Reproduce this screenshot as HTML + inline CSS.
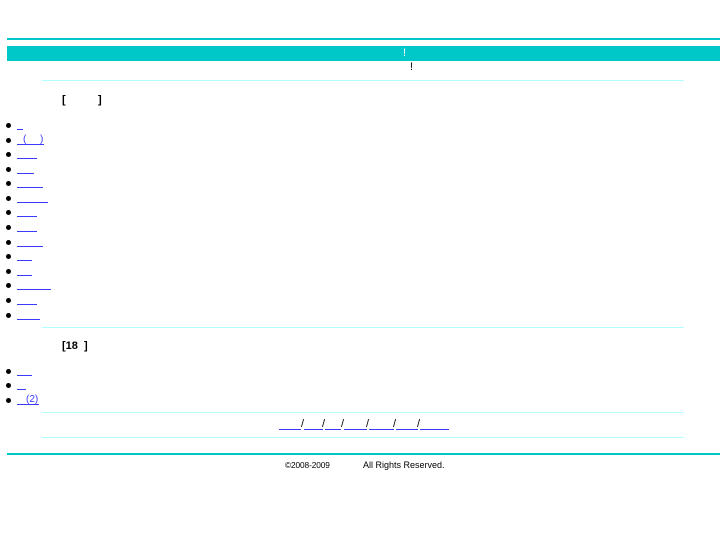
<!DOCTYPE html>
<html><head><meta charset="utf-8"><style>
body{margin:0;width:727px;height:545px;background:#fff;position:relative;font-family:"Liberation Sans",Arial,sans-serif;font-size:11px;color:#000;overflow:hidden}
.a{position:absolute}
.u{position:absolute;height:1px;background:#3a3aff}
.b{position:absolute;left:6px;width:5px;height:5px;border-radius:50%;background:#000}
.t{position:absolute;font-size:11px;line-height:12px}
</style></head><body>
<div class="a" style="left:7px;top:38px;width:713px;height:2px;background:#00c8c8"></div>
<div class="a" style="left:7px;top:46px;width:713px;height:15px;background:#00c8c8"></div>
<div class="t" style="left:403px;top:47px;color:#fff">!</div>
<div class="t" style="left:410px;top:61px">!</div>
<div class="a" style="left:42px;top:80px;width:642px;height:1px;background:#b0ffff"></div>
<div class="t" style="left:62px;top:94px;font-weight:bold">[</div>
<div class="t" style="left:98px;top:94px;font-weight:bold">]</div>

<div class="b" style="top:123px"></div><div class="u" style="left:17px;top:129px;width:6px"></div>
<div class="b" style="top:138px"></div><div class="u" style="left:17px;top:144px;width:27px"></div><div class="t" style="left:23px;top:134px;color:#3a3aff;font-size:10px">(</div><div class="t" style="left:40px;top:134px;color:#3a3aff;font-size:10px">)</div>
<div class="b" style="top:152px"></div><div class="u" style="left:17px;top:158px;width:20px"></div>
<div class="b" style="top:167px"></div><div class="u" style="left:17px;top:173px;width:17px"></div>
<div class="b" style="top:181px"></div><div class="u" style="left:17px;top:187px;width:26px"></div>
<div class="b" style="top:196px"></div><div class="u" style="left:17px;top:202px;width:31px"></div>
<div class="b" style="top:210px"></div><div class="u" style="left:17px;top:216px;width:20px"></div>
<div class="b" style="top:225px"></div><div class="u" style="left:17px;top:231px;width:20px"></div>
<div class="b" style="top:240px"></div><div class="u" style="left:17px;top:246px;width:26px"></div>
<div class="b" style="top:254px"></div><div class="u" style="left:17px;top:260px;width:15px"></div>
<div class="b" style="top:269px"></div><div class="u" style="left:17px;top:275px;width:15px"></div>
<div class="b" style="top:283px"></div><div class="u" style="left:17px;top:289px;width:34px"></div>
<div class="b" style="top:298px"></div><div class="u" style="left:17px;top:304px;width:20px"></div>
<div class="b" style="top:313px"></div><div class="u" style="left:17px;top:319px;width:23px"></div>

<div class="a" style="left:42px;top:327px;width:642px;height:1px;background:#b0ffff"></div>
<div class="t" style="left:62px;top:340px;font-weight:bold">[18&nbsp;&nbsp;]</div>

<div class="b" style="top:369px"></div><div class="u" style="left:17px;top:375px;width:15px"></div>
<div class="b" style="top:383px"></div><div class="u" style="left:17px;top:389px;width:9px"></div>
<div class="b" style="top:398px"></div><div class="u" style="left:17px;top:404px;width:22px"></div><div class="t" style="left:26px;top:394px;color:#3a3aff;font-size:10px">(2)</div>

<div class="a" style="left:42px;top:412px;width:642px;height:1px;background:#b0ffff"></div>
<div class="u" style="left:279px;top:429px;width:22px"></div><div class="t" style="left:301px;top:418px">/</div>
<div class="u" style="left:304px;top:429px;width:19px"></div><div class="t" style="left:322px;top:418px">/</div>
<div class="u" style="left:325px;top:429px;width:16px"></div><div class="t" style="left:341px;top:418px">/</div>
<div class="u" style="left:344px;top:429px;width:23px"></div><div class="t" style="left:366px;top:418px">/</div>
<div class="u" style="left:369px;top:429px;width:25px"></div><div class="t" style="left:393px;top:418px">/</div>
<div class="u" style="left:396px;top:429px;width:22px"></div><div class="t" style="left:417px;top:418px">/</div>
<div class="u" style="left:420px;top:429px;width:29px"></div>
<div class="a" style="left:42px;top:437px;width:642px;height:1px;background:#b0ffff"></div>
<div class="a" style="left:7px;top:453px;width:713px;height:2px;background:#00c8c8"></div>
<div class="t" style="left:285px;top:459px;font-size:8.3px;letter-spacing:-0.1px">©2008-2009</div>
<div class="t" style="left:363px;top:459px;font-size:9px">All Rights Reserved.</div>
</body></html>
